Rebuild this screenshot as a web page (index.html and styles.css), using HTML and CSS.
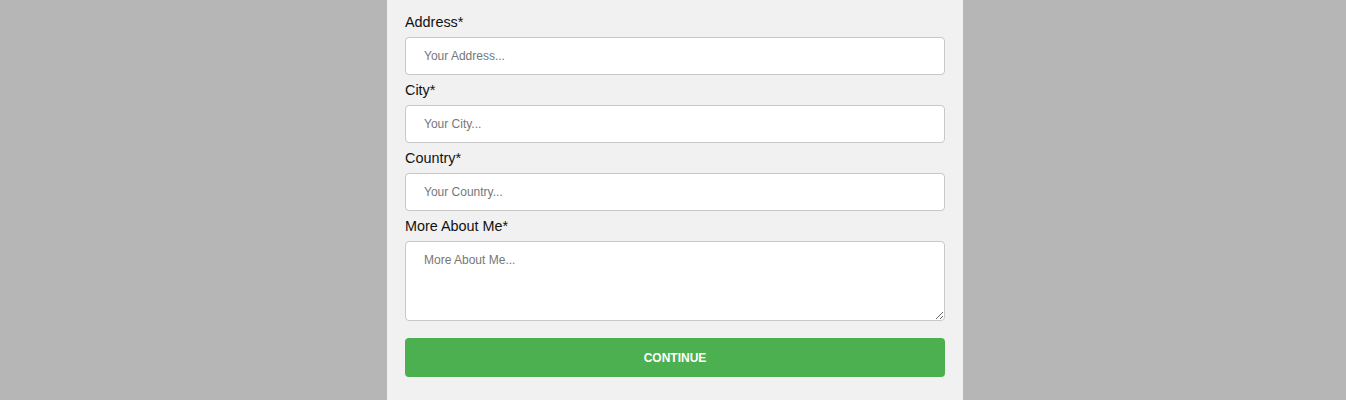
FILE: index.html
```html
<!DOCTYPE html>
<html lang="en">
<head>
<meta charset="utf-8">
<title>Form</title>
<link rel="stylesheet" href="styles.css">
</head>
<body>
<div class="page">
  <form class="panel">
    <div class="field">
      <label class="label" for="address">Address*</label>
      <input class="input" id="address" type="text" placeholder="Your Address...">
    </div>
    <div class="field">
      <label class="label" for="city">City*</label>
      <input class="input" id="city" type="text" placeholder="Your City...">
    </div>
    <div class="field">
      <label class="label" for="country">Country*</label>
      <input class="input" id="country" type="text" placeholder="Your Country...">
    </div>
    <div class="field">
      <label class="label" for="about">More About Me*</label>
      <textarea class="input textarea" id="about" placeholder="More About Me..."></textarea>
    </div>
    <button class="button" type="button">CONTINUE</button>
  </form>
</div>
</body>
</html>
```
FILE: styles.css
```css
html, body {
  margin: 0;
  padding: 0;
  height: 100%;
  overflow: hidden;
}
body {
  background: #b6b6b6;
  font-family: "Liberation Sans", Arial, sans-serif;
  color: #111;
}
.page {
  display: flex;
  justify-content: center;
  height: 100%;
  padding-left: 4px;
  box-sizing: border-box;
}
.panel {
  width: 576px;
  box-sizing: border-box;
  background: #f1f1f1;
  padding: 12px 18px 0;
  display: flex;
  flex-direction: column;
  gap: 5px;
}
.field {
  display: flex;
  flex-direction: column;
  gap: 5px;
}
.label {
  font-size: 14.4px;
  line-height: 19px;
  padding-top: 1px;
}
.input {
  box-sizing: border-box;
  width: 540px;
  height: 38px;
  margin: 0;
  border: 1px solid #c8c8c8;
  border-radius: 4px;
  background: #fff;
  padding: 0 18px;
  font-family: "Liberation Sans", Arial, sans-serif;
  font-size: 12px;
  color: #333;
  outline: none;
}
.input::placeholder {
  color: #777;
}
.textarea {
  height: 80px;
  padding: 11px 18px;
  resize: vertical;
  display: block;
}
.button {
  margin-top: 12px;
  width: 540px;
  height: 39px;
  border: none;
  border-radius: 4px;
  background: #4caf50;
  color: #fff;
  font-family: "Liberation Sans", Arial, sans-serif;
  font-size: 12px;
  font-weight: bold;
  cursor: pointer;
}
```
